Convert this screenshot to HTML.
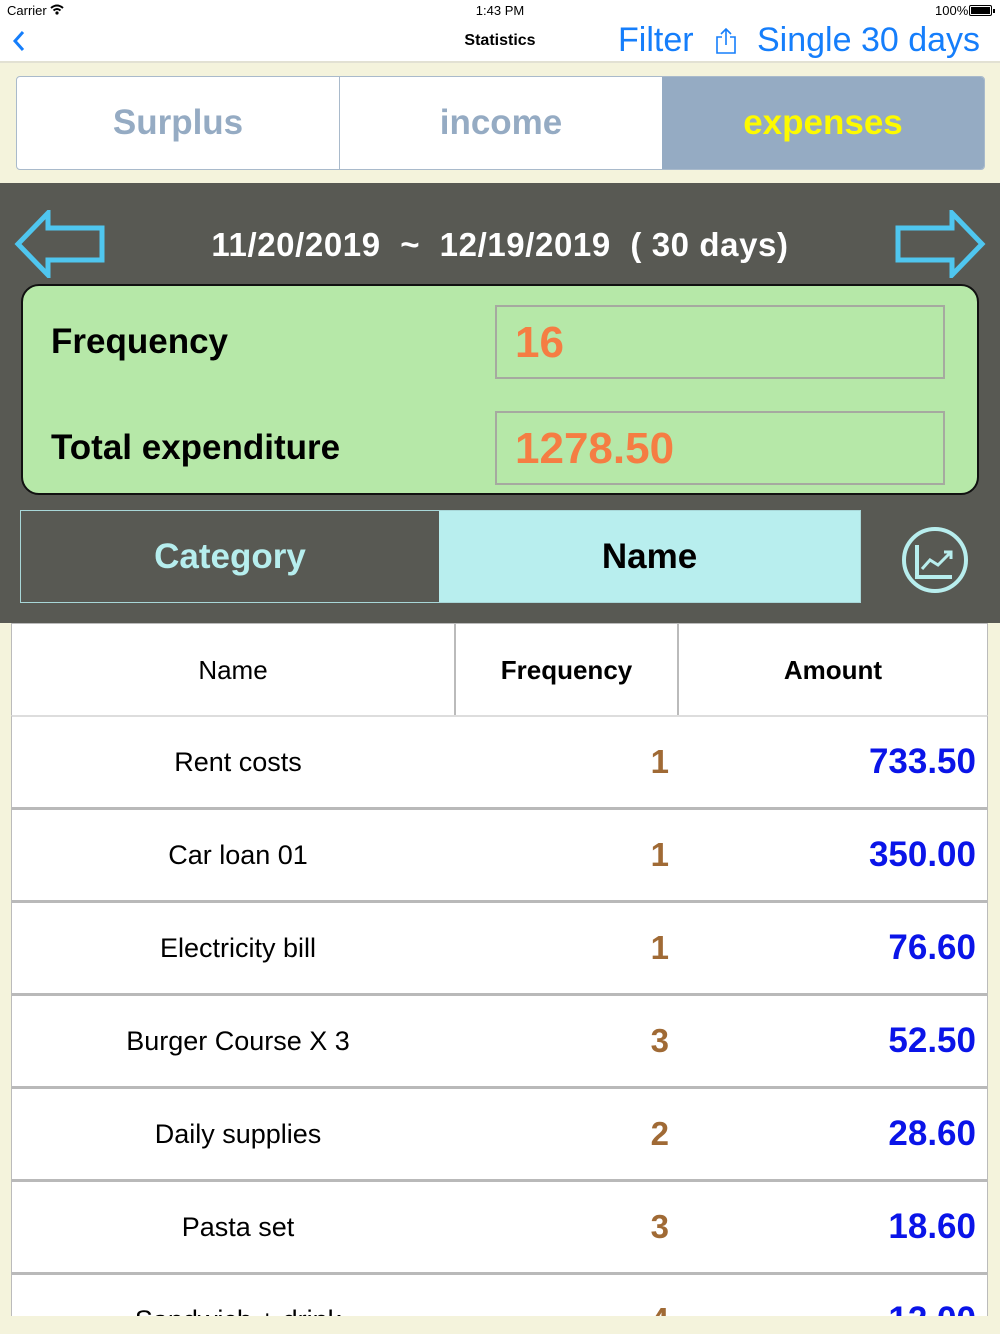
<!DOCTYPE html>
<html><head><meta charset="utf-8">
<style>
*{margin:0;padding:0;box-sizing:border-box}
body{width:1000px;height:1334px;overflow:hidden;background:#f4f3dc;font-family:"Liberation Sans",Arial,sans-serif;position:relative}
.a{position:absolute}
.status{top:0;left:0;width:1000px;height:63px;background:#fff;border-bottom:2px solid #e2e1d3}
.seg{top:76px;left:16px;width:969px;height:94px;border:1px solid #a9bacb;border-radius:4px;background:#fff;overflow:hidden;display:flex}
.seg div{flex:1;text-align:center;line-height:92px;font-size:35px;font-weight:bold;color:#95abc3}
.dark{top:183px;left:0;width:1000px;height:440px;background:#585953}
.green{top:284px;left:21px;width:958px;height:211px;background:#b6e8a8;border:2px solid #111;border-radius:18px}
.box{left:472px;width:450px;height:74px;border:2px solid #a6a9a0;color:#f57d43;font-size:44px;font-weight:bold;line-height:72px;padding-left:18px}
.lbl{left:28px;font-size:35px;font-weight:bold;color:#000}
.tab{top:510px;left:20px;width:841px;height:93px;border:1px solid #a8d7d8;display:flex}
.tab div{text-align:center;line-height:91px;font-size:35px;font-weight:bold}
.tbl{left:11px;width:977px;background:#fff;border-left:1px solid #bbb;border-right:1px solid #bbb}
.row{height:93px;border-bottom:3px solid #b9b9b9;position:relative}
.row span{position:absolute;top:0;line-height:90px}
.n{left:0;width:452px;text-align:center;font-size:27px;color:#000}
.f{right:318px;font-size:33px;font-weight:bold;color:#a06a35}
.m{right:11px;font-size:35px;font-weight:bold;color:#0a14e8}
</style></head><body>
<div class="a status"></div>
<div class="a" style="top:3px;left:7px;font-size:13px">Carrier</div>
<svg class="a" style="top:4px;left:50px" width="14" height="11" viewBox="0 0 14 11"><path d="M1 4Q7 -1 13 4" stroke="#000" stroke-width="2" fill="none"/><path d="M3.5 6.5Q7 3.5 10.5 6.5" stroke="#000" stroke-width="2" fill="none"/><circle cx="7" cy="9" r="1.6"/></svg>
<div class="a" style="top:3px;left:0;width:1000px;text-align:center;font-size:13px">1:43 PM</div>
<div class="a" style="top:3px;left:935px;font-size:13px">100%</div>
<div class="a" style="top:5px;left:969px;width:23px;height:11px;border:1px solid #000;border-radius:2px;padding:1px"><div style="width:100%;height:100%;background:#000"></div></div>
<div class="a" style="top:9px;left:993px;width:2px;height:4px;background:#000"></div>
<svg class="a" style="top:30px;left:12px" width="14" height="22" viewBox="0 0 14 22"><path d="M11 2L3 11L11 20" stroke="#157efb" stroke-width="3" fill="none"/></svg>
<div class="a" style="top:32px;left:0;width:1000px;text-align:center;font-size:16px;font-weight:bold;color:#000">Statistics</div>
<div class="a" style="top:21px;left:618px;font-size:34px;color:#157efb">Filter</div>
<svg class="a" style="top:27px;left:714px" width="24" height="28" viewBox="0 0 24 28"><path d="M8 10H3V26H21V10H16" stroke="#157efb" stroke-width="1.6" fill="none"/><path d="M12 18V2M7 7L12 2L17 7" stroke="#157efb" stroke-width="1.6" fill="none"/></svg>
<div class="a" style="top:21px;left:757px;font-size:34px;color:#157efb">Single 30 days</div>

<div class="a seg"><div style="border-right:1px solid #a9bacb">Surplus</div><div>income</div><div style="background:#95abc3;color:#fdfa00">expenses</div></div>

<div class="a dark"></div>
<svg class="a" style="top:210px;left:14px" width="92" height="68" viewBox="0 0 92 68"><path d="M88 18H34V3L4 34L34 65V50H88Z" stroke="#4fc6ef" stroke-width="5" fill="none" stroke-linejoin="miter"/></svg>
<svg class="a" style="top:210px;left:894px" width="92" height="68" viewBox="0 0 92 68"><path d="M4 18H58V3L88 34L58 65V50H4Z" stroke="#4fc6ef" stroke-width="5" fill="none"/></svg>
<div class="a" style="top:226px;left:0;width:1000px;text-align:center;font-size:33px;letter-spacing:0.6px;font-weight:bold;color:#fff;white-space:pre">11/20/2019  ~  12/19/2019  ( 30 days)</div>

<div class="a green">
 <div class="a lbl" style="top:36px">Frequency</div>
 <div class="a box" style="top:19px">16</div>
 <div class="a lbl" style="top:142px">Total expenditure</div>
 <div class="a box" style="top:125px">1278.50</div>
</div>

<div class="a tab"><div style="width:418px;color:#b6eeee">Category</div><div style="flex:1;background:#b8eeee;color:#000">Name</div></div>
<svg class="a" style="top:525px;left:900px" width="70" height="70" viewBox="0 0 70 70"><circle cx="35" cy="35" r="31" stroke="#b8eeee" stroke-width="4" fill="none"/><path d="M17 20V52H52" stroke="#b8eeee" stroke-width="4" fill="none"/><path d="M22 44L30 35L38 40L51 27M44 27H51V34" stroke="#b8eeee" stroke-width="3" fill="none"/></svg>

<div class="a tbl" style="top:623px;height:92px;border-top:1px solid #bbb;display:flex">
 <div style="width:444px;text-align:center;line-height:92px;font-size:26px;border-right:2px solid #bbb">Name</div>
 <div style="width:223px;text-align:center;line-height:92px;font-size:26px;font-weight:bold;border-right:2px solid #bbb">Frequency</div>
 <div style="flex:1;text-align:center;line-height:92px;font-size:26px;font-weight:bold">Amount</div>
</div>
<div class="a tbl" style="top:715px;height:601px;overflow:hidden;border-top:2px solid #ddd">
 <div class="row"><span class="n">Rent costs</span><span class="f">1</span><span class="m">733.50</span></div>
 <div class="row"><span class="n">Car loan 01</span><span class="f">1</span><span class="m">350.00</span></div>
 <div class="row"><span class="n">Electricity bill</span><span class="f">1</span><span class="m">76.60</span></div>
 <div class="row"><span class="n">Burger Course X 3</span><span class="f">3</span><span class="m">52.50</span></div>
 <div class="row"><span class="n">Daily supplies</span><span class="f">2</span><span class="m">28.60</span></div>
 <div class="row"><span class="n">Pasta set</span><span class="f">3</span><span class="m">18.60</span></div>
 <div class="row"><span class="n">Sandwich + drink</span><span class="f">4</span><span class="m">12.00</span></div>
</div>
</body></html>
